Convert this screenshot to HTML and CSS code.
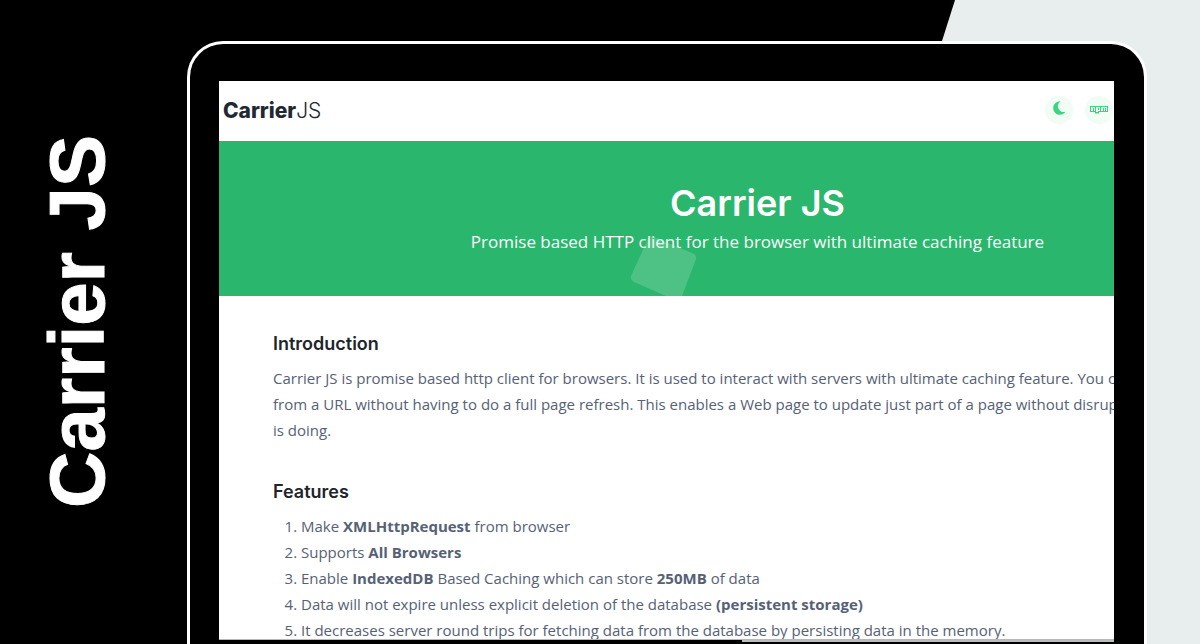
FILE: index.html
```html
<!DOCTYPE html>
<html lang="en">
<head>
<meta charset="utf-8">
<meta name="viewport" content="width=device-width, initial-scale=1">
<title>Carrier JS</title>
<link rel="stylesheet" href="styles.css">
</head>
<body>
<div class="backdrop"></div>
<div class="cover">
  <div class="banner"><span class="banner-title">Carrier JS</span></div>
  <div class="device">
    <div class="screen">
      <header class="topbar">
        <a class="brand" href="#"><strong>Carrier</strong>JS</a>
        <nav class="actions">
          <button class="action" type="button" aria-label="Dark mode">
            <svg class="moon" viewBox="0 0 14 14" aria-hidden="true"><path d="M8.400 0.200A6.800 6.800 0 1 0 13.600 10.800A6 6 0 0 1 8.400 0.200Z"/></svg>
          </button>
          <a class="action" href="#npm" aria-label="npm">
            <svg class="npm" viewBox="0 0 18 8" aria-hidden="true"><path fill-rule="evenodd" d="M0 0H18V6H9V7.500H5V6H0ZM1 1V5H3V2H4V5H5V1ZM6 1V6H8V5H10V1ZM8 2H9V4H8ZM11 1V5H13V2H14V5H15V2H16V5H17V1Z"/></svg>
          </a>
        </nav>
      </header>
      <section class="hero">
        <h1 class="hero-title">Carrier JS</h1>
        <p class="hero-text">Promise based HTTP client for the browser with ultimate caching feature</p>
        <svg class="hero-shape" viewBox="0 0 68 60" aria-hidden="true"><path d="M18 3Q20-1 24 1L62 17Q67 19 66 23L52 60H36L4 46Q0 44 1 40Z"/></svg>
      </section>
      <main class="content">
        <section class="block">
          <h2 class="heading">Introduction</h2>
          <p class="text">Carrier JS is promise based http client for browsers. It is used to interact with servers with ultimate caching feature. You ca<br>from a URL without having to do a full page refresh. This enables a Web page to update just part of a page without disrupt<br>is doing.</p>
        </section>
        <section class="block">
          <h2 class="heading">Features</h2>
          <ol class="list">
            <li>Make <strong>XMLHttpRequest</strong> from browser</li>
            <li>Supports <strong>All Browsers</strong></li>
            <li>Enable <strong>IndexedDB</strong> Based Caching which can store <strong>250MB</strong> of data</li>
            <li>Data will not expire unless explicit deletion of the database <strong>(persistent storage)</strong></li>
            <li>It decreases server round trips for fetching data from the database by persisting data in the memory.</li>
          </ol>
        </section>
      </main>
    </div>
  </div>
</div>
</body>
</html>
```

FILE: styles.css
```css
* { box-sizing: border-box; }
body {
  margin: 0;
  background: #000;
  font-family: Inter, "Open Sans", sans-serif;
  color: #566176;
}
h1, h2, p, ol { margin: 0; padding: 0; }
a { color: inherit; text-decoration: none; }
strong { font-weight: 700; }

.backdrop {
  position: absolute;
  inset: 0;
  background: #e7eeed;
  clip-path: polygon(955px 0, 100% 0, 100% 100%, 751px 100%);
}
.cover {
  position: relative;
  display: grid;
  grid-template-columns: 187px 1fr;
  height: 100vh;
  padding-right: 53px;
  overflow: hidden;
}
.banner {
  display: flex;
  align-items: center;
  justify-content: center;
  padding: 0 34px 2px 0;
}
.banner-title {
  writing-mode: vertical-rl;
  transform: rotate(180deg);
  font: 700 78px/1 "Liberation Sans", sans-serif;
  color: #fff;
  -webkit-text-stroke: 1px #fff;
  white-space: nowrap;
}
.device {
  min-width: 0;
  min-height: 0;
  margin-top: 41px;
  padding: 37px 30px 2px 29px;
  background: #000;
  border: 3px solid #fff;
  border-bottom: 0;
  border-radius: 36px 36px 0 0;
}
.screen {
  display: flex;
  flex-direction: column;
  height: 100%;
  background: #fff;
  overflow: hidden;
}
.screen::after {
  content: "";
  flex: none;
  height: 3px;
  background: linear-gradient(#b5bab9 1px, transparent 1px), linear-gradient(90deg, #000 523px, #b9bfbe 523px);
}
.topbar {
  display: flex;
  flex: none;
  align-items: center;
  justify-content: space-between;
  height: 60px;
  padding: 0 1px 2px 4px;
}
.brand {
  font-size: 21px;
  font-weight: 300;
  color: #212833;
}
.brand strong { font-weight: 800; }
.actions { display: flex; gap: 12px; }
.action {
  display: grid;
  place-items: center;
  width: 28px;
  height: 28px;
  padding: 0 0 4px;
  border: 0;
  border-radius: 50%;
  background: #f1fcf5;
}
.action svg { fill: #3bd47f; }
.moon { width: 14px; height: 14px; }
.npm { width: 18px; height: 8px; }
.npm { margin-top: 3px; }

.hero {
  position: relative;
  display: flex;
  flex: none;
  flex-direction: column;
  align-items: center;
  height: 155px;
  width: 120%;
  padding: 40px 0 0 3px;
  background: #2ab66c;
  color: #fff;
}
.hero-title {
  font-size: 36px;
  line-height: 44px;
  font-weight: 600;
}
.hero-text {
  margin-top: 3px;
  font: 17px/28px "Open Sans", sans-serif;
}
.hero-shape {
  position: absolute;
  bottom: 0;
  left: 411px;
  width: 68px;
  height: 60px;
  fill: #fff;
  opacity: 0.17;
}
.content {
  display: grid;
  flex: 1;
  align-content: start;
  gap: 36px;
  min-height: 0;
  overflow: hidden;
  padding: 35px 0 0 54px;
  white-space: nowrap;
}
.heading {
  margin-bottom: 8px;
  font-size: 18px;
  line-height: 26px;
  font-weight: 600;
  color: #212529;
}
.text, .list {
  font: 15px/26px "Open Sans", sans-serif;
}
.list { padding-left: 28px; }
```
